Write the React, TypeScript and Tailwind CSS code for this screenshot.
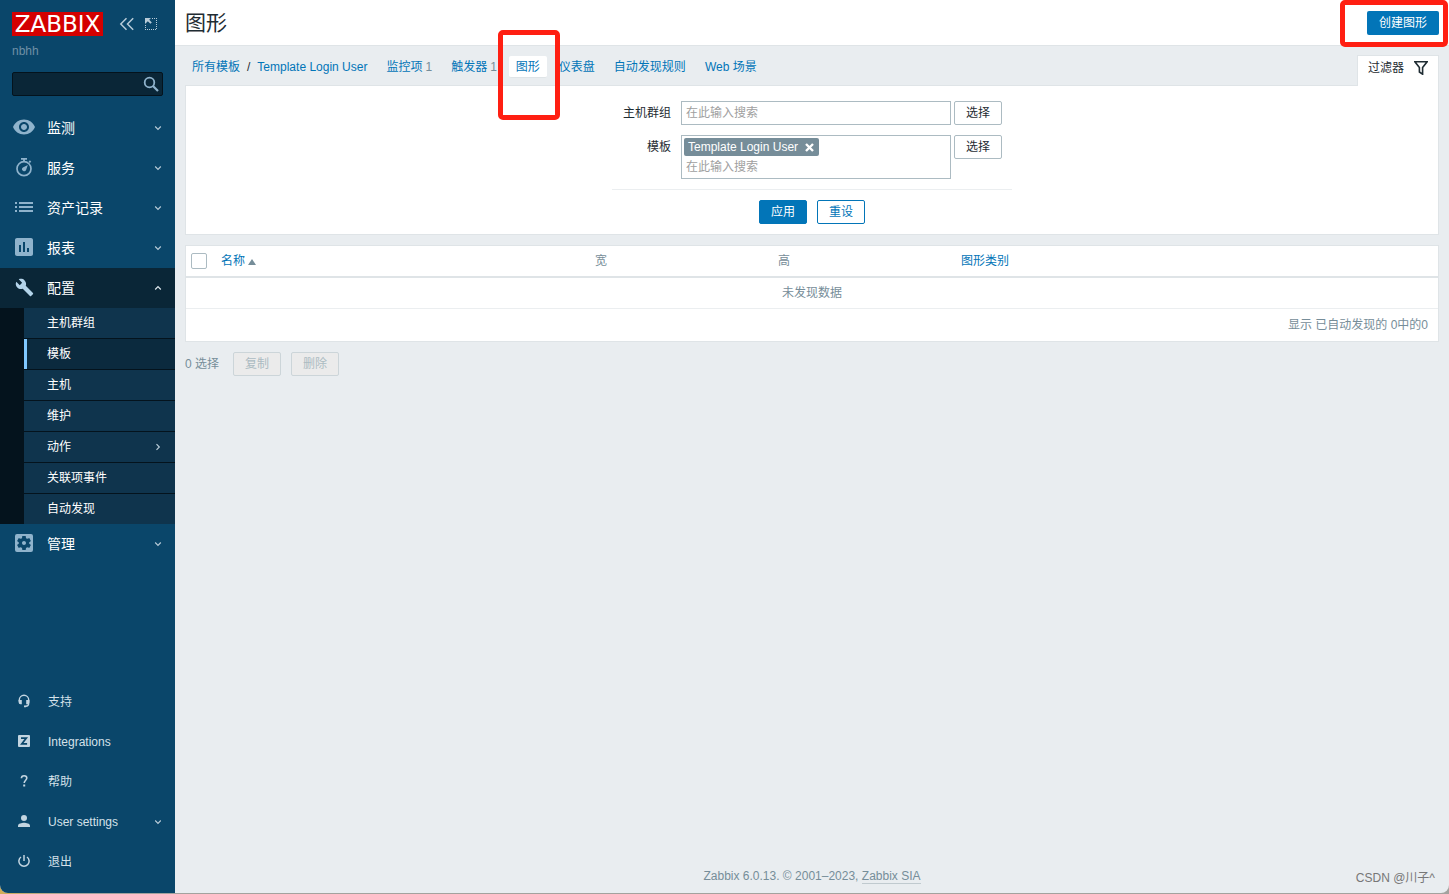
import { useState } from "react";
import type { ReactNode } from "react";
import { MdAssessment, MdSettingsApplications, MdVisibility } from "react-icons/md";

interface MenuEntry {
  label: string;
  icon: ReactNode;
  expandable?: boolean;
}

function Chevron({ className = "" }: { className?: string }) {
  return (
    <svg viewBox="0 0 8 8" className={`size-2 shrink-0 ${className}`} fill="none" stroke="currentColor">
      <path d="M1.2 2.5 4 5.3 6.8 2.5" strokeWidth="1.2" />
    </svg>
  );
}

function StopwatchIcon() {
  return (
    <svg viewBox="0 0 24 24" className="size-6" fill="none" stroke="currentColor">
      <circle cx="12" cy="13.7" r="7" strokeWidth="1.7" />
      <path d="M9 3.9h6M12 4v2.5" strokeWidth="1.8" />
      <path d="m17.2 7.4 1.4-1.4" strokeWidth="1.8" />
      <path d="m15.8 10-1.7 5a2.1 2.1 0 1 1-3.2-2.6z" fill="currentColor" stroke="none" />
    </svg>
  );
}

function ListIcon() {
  return (
    <svg viewBox="0 0 24 24" className="size-6" fill="currentColor">
      <path d="M3 7h2v2H3zM7 7h14v2H7zM3 11h2v2H3zM7 11h14v2H7zM3 15h2v2H3zM7 15h14v2H7z" />
    </svg>
  );
}

function WrenchIcon() {
  return (
    <svg viewBox="0 0 24 24" className="size-[19px]" fill="currentColor">
      <path d="M22.7 19l-9.1-9.1c.9-2.3.4-5-1.5-6.9-2-2-5-2.4-7.4-1.3L9 6 6 9 1.6 4.7C.4 7.1.9 10.1 2.9 12.1c1.9 1.9 4.6 2.4 6.9 1.5l9.1 9.1c.4.4 1 .4 1.4 0l2.3-2.3c.5-.4.5-1.1.1-1.4z" />
    </svg>
  );
}

function HeadsetIcon() {
  return (
    <svg viewBox="0 0 14 14" className="size-[14px]" fill="none" stroke="currentColor">
      <path d="M2.3 7.5V6a4.7 4.7 0 0 1 9.4 0v3c0 2-1 3.3-3 3.3" strokeWidth="1.4" />
      <path d="M1.6 6h3.2v4.2H3.5a1.9 1.9 0 0 1-1.9-1.9zM9.2 6h3.2v2.3a1.9 1.9 0 0 1-1.9 1.9H9.2z" fill="currentColor" stroke="none" />
      <path d="M7 11.4h2v1.8H7z" fill="currentColor" stroke="none" />
    </svg>
  );
}

function IntegrationsIcon() {
  return (
    <svg viewBox="0 0 12 12" className="size-3">
      <rect width="12" height="12" rx="1" fill="currentColor" />
      <path d="M3 3.2h5.2L3.9 8.8h5.2" fill="none" stroke="#0a466a" strokeWidth="1.8" />
    </svg>
  );
}

function HelpIcon() {
  return (
    <svg viewBox="0 0 12 14" className="h-[14px] w-3" fill="none" stroke="currentColor">
      <path d="M3.4 4.3c0-1.7 1.1-2.6 2.7-2.6s2.7.9 2.7 2.4c0 2.1-2.6 2.2-2.6 5" strokeWidth="1.6" />
      <path d="M5.2 10.6h2v2h-2z" fill="currentColor" stroke="none" />
    </svg>
  );
}

function UserIcon() {
  return (
    <svg viewBox="0 0 12 12" className="size-3" fill="currentColor">
      <circle cx="6" cy="3" r="3" />
      <path d="M0 12v-1.4C0 8.700 3.800 7.800 6 7.800s6 .9 6 2.800V12z" />
    </svg>
  );
}

function PowerIcon() {
  return (
    <svg viewBox="0 0 12 12" className="size-3" fill="none" stroke="currentColor" strokeWidth="1.5">
      <path d="M6 0v6" />
      <path d="M3 2a5.100 5.100 0 1 0 6 0" />
    </svg>
  );
}

const MAIN_MENU: MenuEntry[] = [
  { label: "监测", icon: <MdVisibility size={24} /> },
  { label: "服务", icon: <StopwatchIcon /> },
  { label: "资产记录", icon: <ListIcon /> },
  { label: "报表", icon: <MdAssessment size={24} /> },
];

const SUBMENU = ["主机群组", "模板", "主机", "维护", "动作", "关联项事件", "自动发现"];

const USER_MENU: MenuEntry[] = [
  { label: "支持", icon: <HeadsetIcon /> },
  { label: "Integrations", icon: <IntegrationsIcon /> },
  { label: "帮助", icon: <HelpIcon /> },
  { label: "User settings", icon: <UserIcon />, expandable: true },
  { label: "退出", icon: <PowerIcon /> },
];

const TABS = [
  { label: "监控项", count: 1 },
  { label: "触发器", count: 1 },
  { label: "图形", selected: true },
  { label: "仪表盘" },
  { label: "自动发现规则" },
  { label: "Web 场景" },
];

function MainMenuItem({ label, icon }: MenuEntry) {
  return (
    <li>
      <a href="#" className="flex h-10 items-center pr-[13px] pl-3 text-sm text-white">
        <span className="flex w-6 justify-center pb-[2px] text-[#8fb3cc]">{icon}</span>
        <span className="ml-[11px] flex-1">{label}</span>
        <Chevron className="text-[#b8cbd8]" />
      </a>
    </li>
  );
}

function Sidebar() {
  return (
    <aside className="flex w-[175px] shrink-0 flex-col bg-[#0a466a] pb-[11px]">
      <div className="px-3 pt-3">
        <div className="flex h-6 items-center">
          <a
            href="#"
            className="flex h-6 w-[91px] items-center justify-center bg-[#d40000] font-['DejaVu_Sans',sans-serif] text-[23px] leading-6 text-white"
          >
            ZABBIX
          </a>
          <button type="button" aria-label="Collapse" className="ml-4 text-[#b8cbd8]">
            <svg viewBox="0 0 16 14" className="h-[14px] w-4" fill="none" stroke="currentColor" strokeWidth="1.5">
              <path d="M7.5 1.2 1.8 7l5.7 5.8M14.2 1.2 8.5 7l5.7 5.8" />
            </svg>
          </button>
          <button type="button" aria-label="Hide" className="ml-[10px] text-[#b8cbd8]">
            <svg viewBox="0 0 12 12" className="size-3" fill="none" stroke="currentColor">
              <path d="M7 .5h5M11.5 2v10M.5 7v5M2 11.5h9" strokeDasharray="1 1" />
              <path d="M0 0h6L4.2 1.8l2.6 2.6-1.4 1.4-2.6-2.6L0 6z" fill="currentColor" stroke="none" />
            </svg>
          </button>
        </div>
        <div className="mt-[7px] leading-4 text-[#6f90a6]">nbhh</div>
        <form className="mt-[13px] flex h-6 items-center rounded-[2px] border border-[#04131d] bg-[#0a2637] pr-[3px]">
          <input type="text" aria-label="Search" className="min-w-0 flex-1 bg-transparent px-1 text-white outline-none" />
          <button type="button" aria-label="Search" className="text-[#8fb3cc]">
            <svg viewBox="0 0 16 16" className="size-4" fill="none" stroke="currentColor">
              <circle cx="6.5" cy="6.5" r="4.8" strokeWidth="1.8" />
              <path d="m10 10 5 5" strokeWidth="2.2" />
            </svg>
          </button>
        </form>
      </div>

      <nav className="mt-3">
        <ul>
          {MAIN_MENU.map((m) => (
            <MainMenuItem key={m.label} {...m} />
          ))}
          <li>
            <a href="#" className="flex h-10 items-center bg-[#0a2637] pr-[13px] pl-3 text-sm text-white">
              <span className="flex w-6 justify-center pb-[2px] text-[#b4d4ea]">
                <WrenchIcon />
              </span>
              <span className="ml-[11px] flex-1">配置</span>
              <Chevron className="rotate-180 text-[#dfe8ee]" />
            </a>
            <ul className="divide-y divide-[#04131d] border-l-24 border-[#04131d] bg-[#0f344d]">
              {SUBMENU.map((label) => (
                <li key={label}>
                  <a
                    href="#"
                    className={`flex h-[30px] items-center border-l-3 pr-[13px] pl-5 text-white ${
                      label === "模板" ? "border-[#80c8ff] bg-[#0b2a3e]" : "border-transparent"
                    }`}
                  >
                    <span className="flex-1">{label}</span>
                    {label === "动作" && <Chevron className="-rotate-90 text-[#b8cbd8]" />}
                  </a>
                </li>
              ))}
            </ul>
          </li>
          <MainMenuItem label="管理" icon={<MdSettingsApplications size={24} />} />
        </ul>
      </nav>

      <nav className="mt-auto">
        <ul>
          {USER_MENU.map((m) => (
            <li key={m.label}>
              <a href="#" className="flex h-10 items-center pr-[13px] pl-3 text-[#d5e1e9]">
                <span className="flex w-6 justify-center pb-[2px] text-[#c3d5e1]">{m.icon}</span>
                <span className="ml-3 flex-1">{m.label}</span>
                {m.expandable && <Chevron className="text-[#b8cbd8]" />}
              </a>
            </li>
          ))}
        </ul>
      </nav>
    </aside>
  );
}

function SelectButton() {
  return (
    <button type="button" className="ml-[3px] h-6 w-12 rounded-[2px] border border-[#acbbc2] bg-white text-[#1f2c33]">
      选择
    </button>
  );
}

function FilterPanel() {
  const [templates, setTemplates] = useState(["Template Login User"]);

  return (
    <form className="flex justify-center border border-[#dfe4e7] bg-white pt-[15px] pb-[10px]">
      <div className="w-[400px]">
        <div className="flex items-start">
          <label htmlFor="groups" className="w-[59px] text-right leading-6">
            主机群组
          </label>
          <input
            id="groups"
            type="text"
            placeholder="在此输入搜索"
            className="ml-[10px] h-6 w-[270px] border border-[#acbbc2] px-1 placeholder:text-[#a0a0a0]"
          />
          <SelectButton />
        </div>
        <div className="mt-[10px] flex items-start">
          <label htmlFor="templates" className="w-[59px] text-right leading-6">
            模板
          </label>
          <div className="ml-[10px] w-[270px] border border-[#acbbc2] px-[2px] pt-[2px] pb-px">
            {templates.map((t) => (
              <span
                key={t}
                className="flex h-[18px] w-fit items-center gap-[7px] rounded-[2px] bg-[#768d99] pr-[5px] pl-1 text-white"
              >
                {t}
                <button
                  type="button"
                  aria-label="Remove"
                  onClick={() => setTemplates(templates.filter((x) => x !== t))}
                >
                  <svg viewBox="0 0 9 9" className="size-[9px]" stroke="currentColor" strokeWidth="2.4">
                    <path d="m1 1 7 7M8 1 1 8" />
                  </svg>
                </button>
              </span>
            ))}
            <input
              id="templates"
              type="text"
              placeholder="在此输入搜索"
              className="mt-px block h-5 w-full px-[2px] outline-none placeholder:text-[#a0a0a0]"
            />
          </div>
          <SelectButton />
        </div>
        <div className="mt-[10px] flex justify-center gap-[10px] border-t border-[#ebeef0] pt-[10px]">
          <button type="button" className="h-6 w-12 rounded-[2px] border border-[#0275b8] bg-[#0275b8] text-white">
            应用
          </button>
          <button type="button" className="h-6 w-12 rounded-[2px] border border-[#0275b8] bg-white text-[#0275b8]">
            重设
          </button>
        </div>
      </div>
    </form>
  );
}

function GraphTable() {
  return (
    <table className="mt-[10px] w-full table-fixed border-separate border-spacing-0 border border-[#dfe4e7] bg-white text-left text-[#768d99]">
      <thead>
        <tr className="h-8 *:border-b-2 *:border-[#dfe4e7] *:font-normal">
          <th className="w-[29px] pl-[5px]">
            <input
              type="checkbox"
              aria-label="Select all"
              className="block size-4 appearance-none rounded-[2px] border border-[#acbbc2] bg-white"
            />
          </th>
          <th className="w-[374px] pl-[6px]">
            <a href="#" className="inline-flex items-center gap-[3px] text-[#0275b8]">
              名称
              <svg viewBox="0 0 8 6" className="mt-[2px] h-[6px] w-2" fill="#768d99">
                <path d="M4 0 8 6H0z" />
              </svg>
            </a>
          </th>
          <th className="w-[183px] pl-[6px]">宽</th>
          <th className="w-[183px] pl-[6px]">高</th>
          <th className="pl-[6px]">
            <a href="#" className="text-[#0275b8]">
              图形类别
            </a>
          </th>
        </tr>
      </thead>
      <tbody>
        <tr className="h-[31px]">
          <td colSpan={5} className="border-b border-[#ebeef0] text-center">
            未发现数据
          </td>
        </tr>
        <tr className="h-8">
          <td colSpan={5} className="pr-[10px] text-right">
            显示 已自动发现的 0中的0
          </td>
        </tr>
      </tbody>
    </table>
  );
}

export default function App() {
  return (
    <div className="flex min-h-screen bg-linear-to-r from-[#d0ad55] via-[#a3a29e] via-5% to-[#a3a29e] pb-px font-['Liberation_Sans','Noto_Sans_CJK_SC',sans-serif] text-xs text-[#1f2c33]">
      <div className="relative flex min-w-0 flex-1 overflow-hidden rounded-b-lg bg-[#e9edf0]">
        <Sidebar />
        <div className="flex min-w-0 flex-1 flex-col">
          <header className="flex h-[46px] items-center justify-between border-b border-[#dfe4e7] bg-white px-[10px]">
            <h1 className="text-[21px] leading-7">图形</h1>
            <div className="relative">
              <button type="button" className="block h-6 w-[72px] rounded-[2px] bg-[#0275b8] text-white">
                创建图形
              </button>
              <div className="pointer-events-none absolute -top-[11px] -right-[9px] h-[47px] w-[108px] rounded-[5px] border-5 border-[#ff1f12]" />
            </div>
          </header>

          <main className="px-[10px]">
            <div className="flex items-end justify-between pt-[9px]">
              <nav className="flex h-[29px] items-start gap-[5px] text-[#0275b8]">
                <div className="flex h-[22px] items-center px-[7px]">
                  <a href="#">所有模板</a>
                  <span className="mx-[7px] text-[#1f2c33]">/</span>
                  <a href="#">Template Login User</a>
                </div>
                {TABS.map((t) => (
                  <div key={t.label} className="relative">
                    <a
                      href="#"
                      className={`flex h-[22px] items-center gap-[3px] px-[7px] ${
                        t.selected ? "rounded-[2px] border-b border-[#dfe4e7] bg-white" : ""
                      }`}
                    >
                      {t.label}
                      {t.count && <span className="text-[#768d99]">{t.count}</span>}
                    </a>
                    {t.selected && (
                      <div className="pointer-events-none absolute -top-[26px] -left-[11px] z-10 h-[90px] w-[62px] rounded-[5px] border-5 border-[#ff1f12]" />
                    )}
                  </div>
                ))}
              </nav>
              <button
                type="button"
                className="relative -mb-px flex h-[31px] items-center gap-[10px] border border-b-0 border-[#dfe4e7] bg-white px-[10px] pb-[6px]"
              >
                过滤器
                <svg viewBox="0 0 14 14" className="size-[14px]" fill="none" stroke="#1f2c33" strokeWidth="1.6">
                  <path d="M.9.8h12.2L8.6 6.6v6.6L5.4 11V6.6z" />
                </svg>
              </button>
            </div>

            <FilterPanel />
            <GraphTable />

            <div className="mt-[10px] flex items-center gap-[10px] text-[#768d99]">
              <span className="mr-1">0 选择</span>
              <button type="button" disabled className="h-6 w-12 rounded-[2px] border border-[#ccd5d9] bg-[#ebebeb] text-[#acbbc2]">
                复制
              </button>
              <button type="button" disabled className="h-6 w-12 rounded-[2px] border border-[#ccd5d9] bg-[#ebebeb] text-[#acbbc2]">
                删除
              </button>
            </div>
          </main>

          <footer className="mt-auto pb-[9px] text-center leading-4 text-[#768d99]">
            Zabbix 6.0.13. © 2001–2023,{" "}
            <a href="#" className="border-b border-[#c0cacf]">
              Zabbix SIA
            </a>
          </footer>
        </div>
        <span className="absolute right-[14px] bottom-[7px] leading-4 text-[#777]">CSDN @川子^</span>
      </div>
    </div>
  );
}
